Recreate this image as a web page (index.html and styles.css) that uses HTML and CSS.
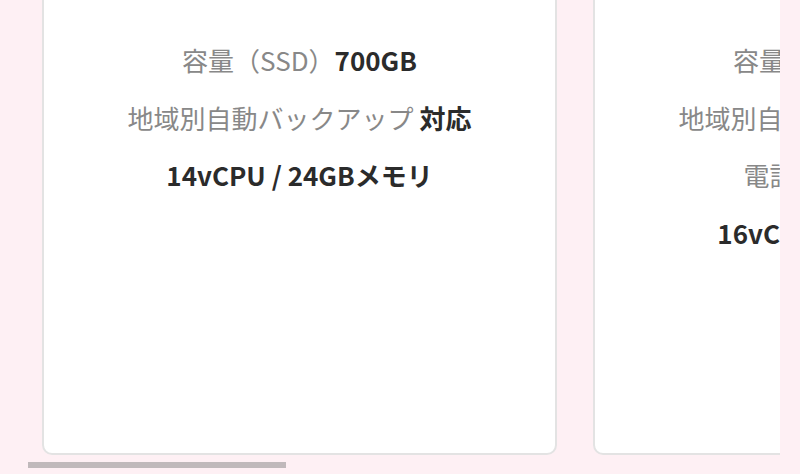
FILE: index.html
```html
<!DOCTYPE html>
<html lang="ja">
<head>
<meta charset="utf-8">
<title>プラン一覧</title>
<link rel="stylesheet" href="styles.css">
</head>
<body>
<main class="plans">
  <div class="plan-viewport">
    <div class="plan-track">
      <article class="plan-card">
        <header class="plan-head">
          <h2 class="plan-name">ビジネス</h2>
          <p class="plan-price">月額 12,800円</p>
        </header>
        <ul class="spec-list">
          <li class="spec"><span class="spec-label">容量（SSD）</span><strong class="spec-value">700GB</strong></li>
          <li class="spec"><span class="spec-label">地域別自動バックアップ </span><strong class="spec-value">対応</strong></li>
          <li class="spec"><strong class="spec-value">14vCPU / 24GBメモリ</strong></li>
        </ul>
      </article>
      <article class="plan-card">
        <header class="plan-head">
          <h2 class="plan-name">エンタープライズ</h2>
          <p class="plan-price">月額 19,800円</p>
        </header>
        <ul class="spec-list">
          <li class="spec"><span class="spec-label">容量（SSD）</span><strong class="spec-value">900GB</strong></li>
          <li class="spec"><span class="spec-label">地域別自動バックアップ </span><strong class="spec-value">対応</strong></li>
          <li class="spec"><span class="spec-label">電話サポート </span><strong class="spec-value">対応</strong></li>
          <li class="spec"><strong class="spec-value">16vCPU / 32GBメモリ</strong></li>
        </ul>
      </article>
      <article class="plan-card">
        <header class="plan-head">
          <h2 class="plan-name">プレミアム</h2>
          <p class="plan-price">月額 29,800円</p>
        </header>
        <ul class="spec-list">
          <li class="spec"><span class="spec-label">容量（SSD）</span><strong class="spec-value">1.2TB</strong></li>
          <li class="spec"><span class="spec-label">地域別自動バックアップ </span><strong class="spec-value">対応</strong></li>
          <li class="spec"><span class="spec-label">電話サポート </span><strong class="spec-value">対応</strong></li>
          <li class="spec"><strong class="spec-value">24vCPU / 48GBメモリ</strong></li>
        </ul>
      </article>
    </div>
  </div>
  <div class="scroll-bar" aria-hidden="true"><div class="scroll-thumb"></div></div>
</main>
</body>
</html>
```
FILE: styles.css
```css
* { box-sizing: border-box; }
html, body { height: 474px; overflow: hidden; }
body {
  margin: 0;
  padding: 0 20px 0 28px;
  background: #fef0f4;
  font-family: "Noto Sans CJK JP", "Noto Sans", sans-serif;
  color: #333;
}
.plans {
  margin-top: -160px;
}
.plan-viewport {
  overflow: hidden;
}
.plan-track {
  display: flex;
  gap: 36px;
  padding: 0 10px 0 14px;
  width: max-content;
}
.plan-card {
  flex: 0 0 515px;
  height: 615px;
  background: #fff;
  border: 2px solid #e3e3e3;
  border-radius: 10px;
  padding: 38px 10px 0;
  text-align: center;
}
.plan-head { height: 162px; }
.plan-name { margin: 0; font-size: 28px; line-height: 40px; }
.plan-price { margin: 10px 0 0; font-size: 22px; line-height: 30px; color: #e0457b; }
.spec-list { list-style: none; margin: 0; padding: 0; }
.spec {
  font-size: 26px;
  line-height: 36px;
  margin-bottom: 21.5px;
  white-space: nowrap;
}
.spec-label { color: #888; font-weight: 400; }
.spec-value { color: #2b2b2b; font-weight: 700; }
.scroll-bar {
  margin-top: 7px;
  height: 6px;
}
.scroll-thumb {
  width: 258px;
  height: 6px;
  background: #c0b9bb;
}
```
